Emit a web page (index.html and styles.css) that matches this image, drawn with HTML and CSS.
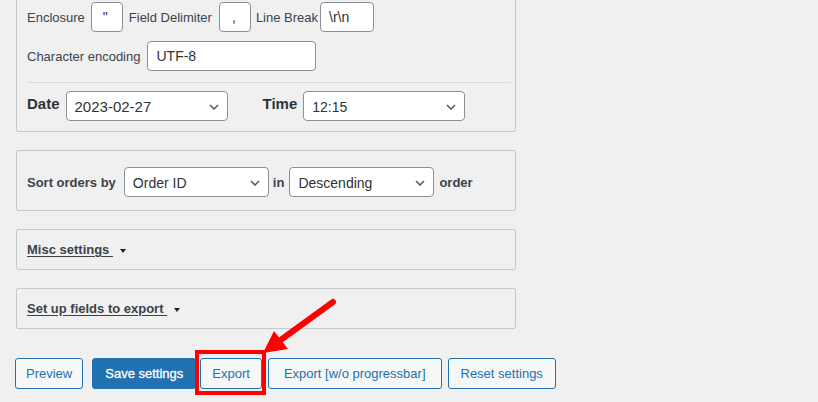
FILE: index.html
```html
<!DOCTYPE html>
<html>
<head>
<meta charset="utf-8">
<link rel="stylesheet" href="styles.css">
</head>
<body>
<div class="page">
  <div class="panel panel-main">
    <div class="row row-delims">
      <span class="lbl">Enclosure</span>
      <span class="field f-encl">"</span>
      <span class="lbl lbl-fd">Field Delimiter</span>
      <span class="field f-delim">,</span>
      <span class="lbl lbl-lb">Line Break</span>
      <span class="field f-lb">\r\n</span>
    </div>
    <div class="row row-enc">
      <span class="lbl">Character encoding</span>
      <span class="field f-enc">UTF-8</span>
    </div>
    <div class="sep"></div>
    <div class="row row-dt">
      <span class="lbl-big">Date</span>
      <span class="select s-date">2023-02-27<svg class="chev" viewBox="0 0 10 6" width="10" height="6"><path d="M1 1l4 4 4-4" fill="none" stroke="#50575e" stroke-width="1.5"/></svg></span>
      <span class="lbl-big lbl-time">Time</span>
      <span class="select s-time">12:15<svg class="chev" viewBox="0 0 10 6" width="10" height="6"><path d="M1 1l4 4 4-4" fill="none" stroke="#50575e" stroke-width="1.5"/></svg></span>
    </div>
  </div>

  <div class="panel panel-sort">
    <span class="lbl-b">Sort orders by</span>
    <span class="select s-sort s-first">Order ID<svg class="chev" viewBox="0 0 10 6" width="10" height="6"><path d="M1 1l4 4 4-4" fill="none" stroke="#50575e" stroke-width="1.5"/></svg></span>
    <span class="lbl-b">in</span>
    <span class="select s-sort">Descending<svg class="chev" viewBox="0 0 10 6" width="10" height="6"><path d="M1 1l4 4 4-4" fill="none" stroke="#50575e" stroke-width="1.5"/></svg></span>
    <span class="lbl-b">order</span>
  </div>

  <div class="panel panel-toggle">
    <span class="toggle">Misc settings&nbsp;</span><span class="caret"></span>
  </div>

  <div class="panel panel-toggle">
    <span class="toggle">Set up fields to export&nbsp;</span><span class="caret"></span>
  </div>

  <div class="buttons">
    <span class="btn btn-preview">Preview</span>
    <span class="btn btn-primary">Save settings</span>
    <span class="btn btn-export">Export</span>
    <span class="btn btn-wide">Export [w/o progressbar]</span>
    <span class="btn">Reset settings</span>
  </div>
</div>

<svg class="annot" width="818" height="402" viewBox="0 0 818 402">
  <rect x="197" y="352" width="67" height="41" fill="none" stroke="#ff0000" stroke-width="4"/>
  <line x1="333" y1="302" x2="282" y2="339" stroke="#ff0000" stroke-width="6" stroke-linecap="round"/>
  <polygon points="263,353 274,331 288,349" fill="#ff0000"/>
</svg>
</body>
</html>
```

FILE: styles.css
```css
html, body {
  margin: 0;
  padding: 0;
  background: #f0f0f1;
  font-family: "Liberation Sans", Arial, sans-serif;
  font-size: 13px;
  color: #3c434a;
  overflow: hidden;
}

.page {
  padding-left: 16px;
  width: 560px;
}

.panel {
  width: 498px;
  border: 1px solid #c8c9cc;
  border-radius: 2px;
  box-sizing: content-box;
  margin-bottom: 18px;
}

.panel-main {
  margin-top: -12px;
  padding: 13px 4px 10px 10px;
  border-top-left-radius: 0;
  border-top-right-radius: 0;
  width: 484px;
}

.row {
  display: flex;
  align-items: center;
  height: 30px;
}

.row-enc {
  margin-top: 9px;
}

.lbl {
  white-space: nowrap;
}

.field {
  display: flex;
  align-items: center;
  box-sizing: border-box;
  height: 30px;
  background: #fff;
  border: 1px solid #8c8f94;
  border-radius: 4px;
  padding: 0 8px;
  font-size: 14px;
  color: #2c3338;
  white-space: nowrap;
}

.f-encl {
  width: 32px;
  margin-left: 6px;
  padding-left: 11px;
}

.lbl-fd {
  margin-left: 6px;
}

.f-delim {
  width: 32px;
  margin-left: 7px;
  padding-left: 12px;
}

.lbl-lb {
  margin-left: 5px;
}

.f-lb {
  width: 54px;
  margin-left: 2px;
}

.f-enc {
  width: 169px;
  margin-left: 7px;
}

.sep {
  height: 1px;
  background: #dcdcde;
  margin: 11px 0 8px 0;
}

.lbl-big {
  font-size: 15px;
  font-weight: bold;
  color: #2c3338;
  align-self: flex-start;
  margin-top: 4px;
}

.lbl-time {
  margin-left: 35px;
}

.select {
  display: flex;
  align-items: center;
  box-sizing: border-box;
  height: 30px;
  background: #fff;
  border: 1px solid #8c8f94;
  border-radius: 4px;
  padding: 1px 8px 0 8px;
  font-size: 14px;
  color: #2c3338;
  white-space: nowrap;
}

.chev {
  margin-left: auto;
}

.s-date {
  width: 162px;
  margin-left: 6px;
  font-size: 15px;
}

.s-time {
  width: 162px;
  margin-left: 6px;
}

.panel-sort {
  display: flex;
  align-items: center;
  padding: 16px 10px 13px 10px;
  width: 478px;
}

.lbl-b {
  font-weight: bold;
  color: #3c434a;
  white-space: nowrap;
}

.s-sort {
  width: 145px;
  margin: 0 5px 0 5px;
}

.s-first {
  margin: 0 4px 0 8px;
}

.panel-toggle {
  padding: 10px 10px;
  width: 478px;
  line-height: 19px;
  display: flex;
  align-items: center;
}

.toggle {
  font-weight: bold;
  text-decoration: underline;
  text-underline-offset: 2px;
  color: #3c434a;
}

.caret {
  width: 0;
  height: 0;
  border-left: 3.5px solid transparent;
  border-right: 3.5px solid transparent;
  border-top: 4px solid #1d2327;
  margin-left: 7px;
  margin-top: 2px;
}

.buttons {
  display: flex;
  margin-top: 29px;
  gap: 6px;
}

.btn {
  display: flex;
  align-items: center;
  box-sizing: border-box;
  height: 31px;
  padding: 0 12px;
  border: 1px solid #2271b1;
  border-radius: 3px;
  background: #f6f7f7;
  color: #2271b1;
  font-size: 13px;
  white-space: nowrap;
}

.btn-preview {
  padding: 0 10px;
  margin-left: -1px;
  margin-right: 3px;
}

.btn-primary {
  background: #2271b1;
  color: #fff;
  padding: 0 12px;
  -webkit-text-stroke: 0.3px #fff;
}

.btn-export {
  margin-left: -2px;
  padding: 0 11px;
}

.btn-wide {
  padding: 0 15px;
}

.annot {
  position: absolute;
  left: 0;
  top: 0;
  pointer-events: none;
}
```
